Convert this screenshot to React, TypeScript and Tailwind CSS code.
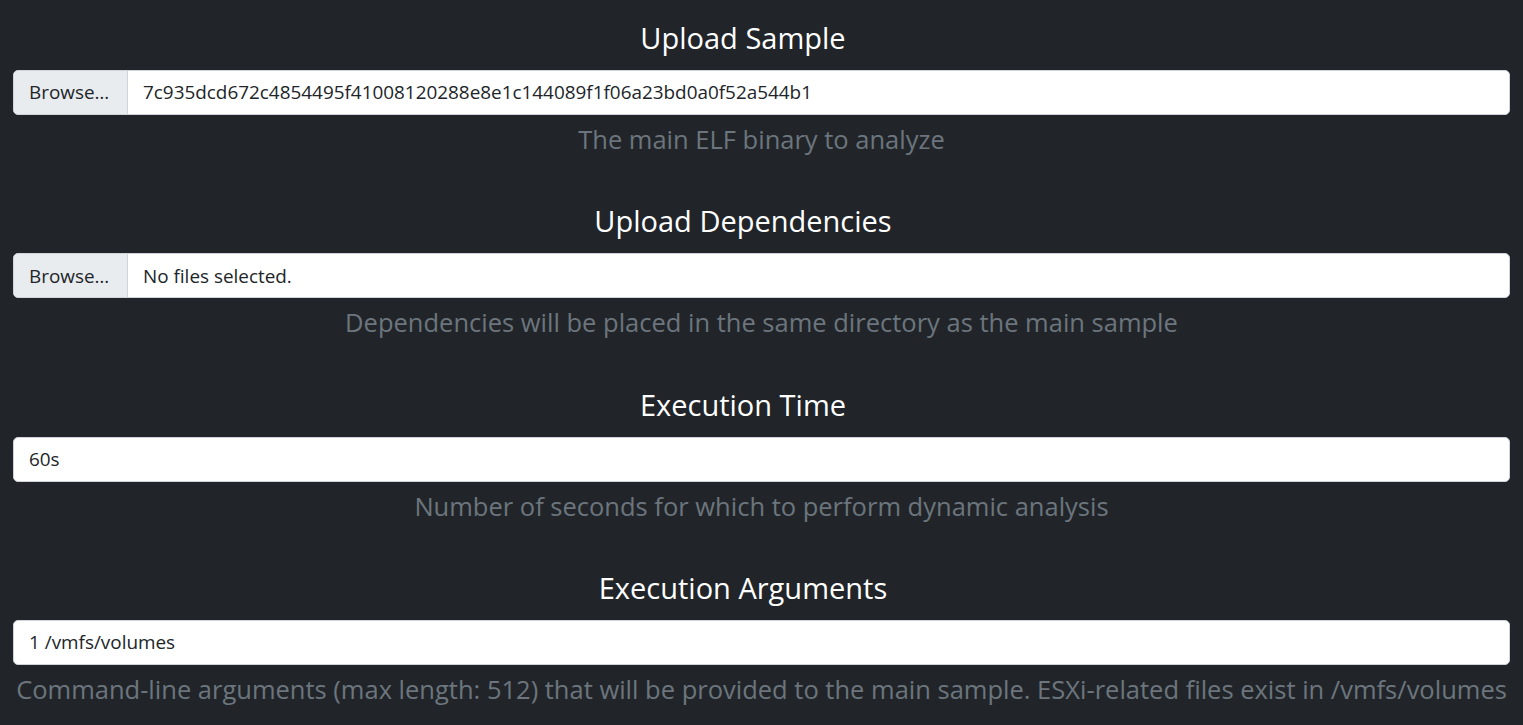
import React from "react";

type Field = {
  title: string;
  help: string;
  value: string;
  file?: boolean;
};

const FIELDS: Field[] = [
  {
    title: "Upload Sample",
    help: "The main ELF binary to analyze",
    value: "7c935dcd672c4854495f41008120288e8e1c144089f1f06a23bd0a0f52a544b1",
    file: true,
  },
  {
    title: "Upload Dependencies",
    help: "Dependencies will be placed in the same directory as the main sample",
    value: "No files selected.",
    file: true,
  },
  {
    title: "Execution Time",
    help: "Number of seconds for which to perform dynamic analysis",
    value: "60s",
  },
  {
    title: "Execution Arguments",
    help: "Command-line arguments (max length: 512) that will be provided to the main sample. ESXi-related files exist in /vmfs/volumes",
    value: "1 /vmfs/volumes",
  },
];

const font = "font-['Open_Sans',sans-serif]";

function Section({ field, first }: { field: Field; first: boolean }) {
  return (
    <div className={`flex flex-col ${first ? "" : "mt-[49.4px]"}`}>
      <h3 className="h-[36px] pr-[37px] text-center text-[29px] leading-[36px] text-white">
        {field.title}
      </h3>
      <div className="mt-[14px] flex h-[45px] overflow-hidden rounded-[5px] border border-[#ced4da] bg-white text-[18.9px] text-[#212529]">
        {field.file && (
          <span className="flex w-[114px] shrink-0 items-center border-r border-[#ced4da] bg-[#e9ecef] pl-[15px]">
            Browse…
          </span>
        )}
        <span className="flex items-center pl-[15px]">{field.value}</span>
      </div>
      <p className="mt-[9px] whitespace-nowrap text-center text-[25.5px] leading-[30px] text-[#6c757d]">
        {field.help}
      </p>
    </div>
  );
}

export default function App() {
  return (
    <div className={`min-h-[725px] bg-[#212529] px-[13px] pt-[20px] ${font}`}>
      {FIELDS.map((f, i) => (
        <Section key={f.title} field={f} first={i === 0} />
      ))}
    </div>
  );
}
